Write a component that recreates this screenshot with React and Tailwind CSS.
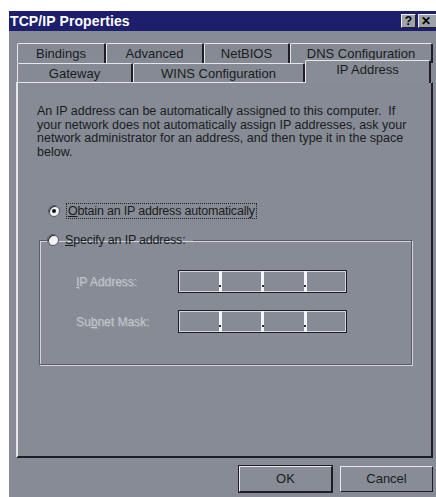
import React from 'react';

const font = { fontFamily: '"Liberation Sans", Arial, sans-serif' };

const Tab = ({ label, width, active = false }) => (
  <div
    className={
      'flex items-center justify-center border-l border-t border-[#e4e6ea] border-r-2 border-r-[#1c1e24] rounded-tl-[2px] rounded-tr-[2px] text-[13px] text-[#1b1c20] ' +
      (active ? 'h-[23px] -mt-[3px] bg-[#878c96] pb-[4px] relative z-10' : 'h-[20px] bg-[#858a94]')
    }
    style={{ width }}
  >
    {label}
  </div>
);

const Radio = ({ checked }) => (
  <span className="w-[12px] h-[12px] rounded-full bg-[#f2f3f5] border border-[#54575e] shadow-[inset_1px_1px_0_#2a2c30] flex items-center justify-center shrink-0">
    {checked && <span className="w-[4px] h-[4px] rounded-full bg-[#111]" />}
  </span>
);

const IpField = () => (
  <div className="w-[169px] h-[23px] border border-[#1c1e24] shadow-[inset_1px_1px_0_#d4d6dc,inset_-1px_-1px_0_#d4d6dc] flex">
    {[0, 1, 2, 3].map(i => (
      <React.Fragment key={i}>
        <div className="flex-1" />
        {i < 3 && (
          <div className="w-[3px] bg-[#f4f5f7] flex items-end justify-center pb-[5px]">
            <span className="w-[2px] h-[2px] bg-[#2a2c30]" />
          </div>
        )}
      </React.Fragment>
    ))}
  </div>
);

const Button = ({ children, isDefault }) => (
  <button
    className={
      'h-[26px] w-[93px] bg-[#878c96] text-[13px] text-[#1b1c20] border border-t-[#e8eaee] border-l-[#e8eaee] border-r-[#1c1e24] border-b-[#1c1e24] ' +
      (isDefault ? 'outline outline-1 outline-[#1c1e24]' : '')
    }
  >
    {children}
  </button>
);

export default function App() {
  return (
    <div className="w-[436px] h-[497px] bg-white pt-[11px] pl-[9px] overflow-hidden" style={font}>
      <div className="w-[427px] h-[486px] bg-[#868b95] flex flex-col">
        {/* title bar */}
        <div className="h-[20px] bg-[#1d1e6c] flex items-center pl-[1px] overflow-hidden">
          <span className="text-white font-bold text-[14px] tracking-[0.1px]">TCP/IP Properties</span>
          <div className="ml-auto flex gap-[2px] items-center shrink-0">
            <div className="w-[15px] h-[14px] bg-[#9ea2aa] border border-t-[#f0f0f0] border-l-[#f0f0f0] border-r-[#222] border-b-[#222] flex items-center justify-center text-[12px] font-bold text-black leading-none">?</div>
            <div className="w-[18px] h-[14px] bg-[#9ea2aa] border border-t-[#f0f0f0] border-l-[#f0f0f0] border-r-0 border-b-[#222] flex items-center justify-start pl-[2px] text-[12px] font-bold text-black leading-none">✕</div>
          </div>
        </div>

        {/* tabs */}
        <div className="mt-[12px] pl-[8px] flex">
          <Tab label="Bindings" width={89} />
          <Tab label="Advanced" width={98} />
          <Tab label="NetBIOS" width={86} />
          <Tab label="DNS Configuration" width={143} />
        </div>
        <div className="pl-[8px] flex">
          <Tab label="Gateway" width={116} />
          <Tab label="WINS Configuration" width={172} />
          <Tab label="IP Address" width={126} active />
        </div>

        {/* panel */}
        <div className="ml-[7px] w-[417px] h-[376px] border-l-2 border-t border-[#e4e6ea] border-r-2 border-r-[#1c1e24] border-b-2 border-b-[#1c1e24] -mt-px pt-[22px] pl-[19px] text-[13px] text-[#1b1c20]">
          <p className="leading-[13.5px] text-[12.5px]">
            An IP address can be automatically assigned to this computer.&nbsp; If<br />
            your network does not automatically assign IP addresses, ask your<br />
            network administrator for an address, and then type it in the space<br />
            below.
          </p>

          <div className="mt-[44px] ml-[11px] flex items-center gap-[6px]">
            <Radio checked />
            <span className="border border-dotted border-[#222] px-[1px] h-[16px] flex items-center text-[12.5px] tracking-[-0.2px]">
              <span className="underline">O</span>btain an IP address automatically
            </span>
          </div>

          <fieldset className="mt-[13px] ml-[2px] w-[373px] h-[133px] border border-[#5a5d65] shadow-[inset_1px_1px_0_#d2d4da,1px_1px_0_#d2d4da]">
            <legend className="ml-[7px] flex items-center gap-[6px] pr-[8px] h-[16px] text-[12.5px] tracking-[-0.2px]">
              <Radio />
              <span><span className="underline">S</span>pecify an IP address:</span>
            </legend>
            <div className="mt-[22px] pl-[36px] flex items-center">
              <span className="w-[102px] text-[12px] text-[#c3c6cc] [text-shadow:1px_1px_0_#9da1a9]">
                <span className="underline">I</span>P Address:
              </span>
              <IpField />
            </div>
            <div className="mt-[17px] pl-[36px] flex items-center">
              <span className="w-[102px] text-[12px] text-[#c3c6cc] [text-shadow:1px_1px_0_#9da1a9]">
                Su<span className="underline">b</span>net Mask:
              </span>
              <IpField />
            </div>
          </fieldset>
        </div>

        {/* buttons */}
        <div className="mt-[8px] flex justify-end gap-[8px] pr-[3px]">
          <Button isDefault>OK</Button>
          <Button>Cancel</Button>
        </div>
      </div>
    </div>
  );
}
